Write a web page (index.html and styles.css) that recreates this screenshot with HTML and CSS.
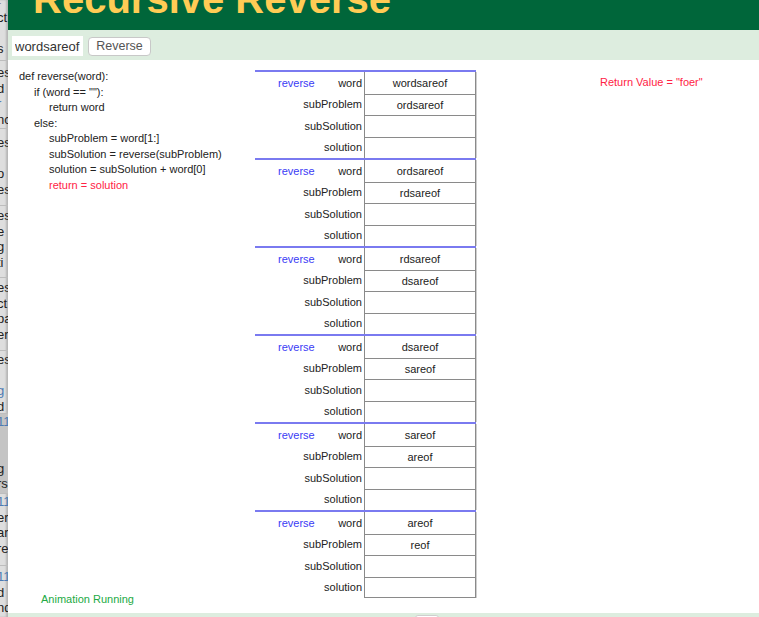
FILE: index.html
```html
<!DOCTYPE html>
<html>
<head>
<meta charset="utf-8">
<link rel="stylesheet" href="styles.css">
</head>
<body>
<div class="page">
  <aside class="sidebar">
    <div class="grp g1"><div>i.</div><div>ct</div><div></div><div>s</div></div>
    <div class="grp g2"><div>es</div><div>d</div><div class="blue">r</div><div>nc</div></div>
    <div class="grp g3"><div>es</div><div></div><div>o</div><div>es</div></div>
    <div class="grp g4"><div>es</div><div>e</div><div>g</div><div>ti</div></div>
    <div class="grp g5"><div>es</div><div>ct</div><div>pa</div><div>er</div></div>
    <div class="grp g6"><div>es</div><div></div><div class="blue">g</div><div>d</div></div>
    <div class="grp g7"><div class="blue">11</div><div></div><div></div><div>g</div><div>rs</div></div>
    <div class="grp g8"><div class="blue">11</div><div>er</div><div>ar</div><div>re</div></div>
    <div class="grp g9"><div class="blue">11</div><div>d</div><div>nd</div></div>
  </aside>
  <main class="main">
    <header class="header"><h1 class="title">Recursive Reverse</h1></header>
    <div class="toolbar">
      <input class="word-input" type="text" value="wordsareof">
      <button class="btn">Reverse</button>
    </div>
    <div class="content">
      <div class="code-col">
        <div class="code">
          <div class="ln">def reverse(word):</div>
          <div class="ln i1">if (word == ""):</div>
          <div class="ln i2">return word</div>
          <div class="ln i1">else:</div>
          <div class="ln i2">subProblem = word[1:]</div>
          <div class="ln i2">subSolution = reverse(subProblem)</div>
          <div class="ln i2">solution = subSolution + word[0]</div>
          <div class="ln i2 hl">return = solution</div>
        </div>
        <div class="status">Animation Running</div>
      </div>
      <div class="stack">
        <div class="frame">
          <div class="row"><div class="lab"><span class="fn">reverse</span>word</div><div class="val">wordsareof</div></div>
          <div class="row"><div class="lab">subProblem</div><div class="val">ordsareof</div></div>
          <div class="row"><div class="lab">subSolution</div><div class="val"></div></div>
          <div class="row"><div class="lab">solution</div><div class="val"></div></div>
        </div>
        <div class="frame">
          <div class="row"><div class="lab"><span class="fn">reverse</span>word</div><div class="val">ordsareof</div></div>
          <div class="row"><div class="lab">subProblem</div><div class="val">rdsareof</div></div>
          <div class="row"><div class="lab">subSolution</div><div class="val"></div></div>
          <div class="row"><div class="lab">solution</div><div class="val"></div></div>
        </div>
        <div class="frame">
          <div class="row"><div class="lab"><span class="fn">reverse</span>word</div><div class="val">rdsareof</div></div>
          <div class="row"><div class="lab">subProblem</div><div class="val">dsareof</div></div>
          <div class="row"><div class="lab">subSolution</div><div class="val"></div></div>
          <div class="row"><div class="lab">solution</div><div class="val"></div></div>
        </div>
        <div class="frame">
          <div class="row"><div class="lab"><span class="fn">reverse</span>word</div><div class="val">dsareof</div></div>
          <div class="row"><div class="lab">subProblem</div><div class="val">sareof</div></div>
          <div class="row"><div class="lab">subSolution</div><div class="val"></div></div>
          <div class="row"><div class="lab">solution</div><div class="val"></div></div>
        </div>
        <div class="frame">
          <div class="row"><div class="lab"><span class="fn">reverse</span>word</div><div class="val">sareof</div></div>
          <div class="row"><div class="lab">subProblem</div><div class="val">areof</div></div>
          <div class="row"><div class="lab">subSolution</div><div class="val"></div></div>
          <div class="row"><div class="lab">solution</div><div class="val"></div></div>
        </div>
        <div class="frame last">
          <div class="row"><div class="lab"><span class="fn">reverse</span>word</div><div class="val">areof</div></div>
          <div class="row"><div class="lab">subProblem</div><div class="val">reof</div></div>
          <div class="row"><div class="lab">subSolution</div><div class="val"></div></div>
          <div class="row"><div class="lab">solution</div><div class="val"></div></div>
        </div>
      </div>
      <div class="result">Return Value = "foer"</div>
    </div>
    <div class="footer"><span class="footer-btn"></span></div>
  </main>
</div>
</body>
</html>
```

FILE: styles.css
```css
html, body {
  margin: 0;
  padding: 0;
  height: 617px;
  overflow: hidden;
  background: #fff;
  font-family: "Liberation Sans", Arial, sans-serif;
}

.page {
  display: flex;
  height: 617px;
}

/* partially visible sidebar */
.sidebar {
  width: 8px;
  flex: none;
  overflow: hidden;
  background: #dedede;
  box-shadow: inset -2px 0 2px rgba(0, 0, 0, 0.18);
  font-size: 13px;
  color: #222;
  white-space: nowrap;
}
.grp {
  overflow: hidden;
  border-bottom: 1px solid #bdbdbd;
  box-sizing: border-box;
}
.grp div {
  height: 15.5px;
  line-height: 15.5px;
  margin-left: -3px;
}
.sidebar .blue { color: #4d7bb3; }
.g1 { height: 61px; }
.g1 div:first-child { margin-top: -6px; font-size: 9px; color: #777; }
.g2 { height: 68px; padding-top: 4px; }
.g3 { height: 77px; padding-top: 6px; }
.g4 { height: 72px; padding-top: 2px; }
.g5 { height: 73px; padding-top: 2px; }
.g6 { height: 63px; padding-top: 1px; }
.g7 { height: 80px; background: #c4c4c4; }
.g8 { height: 72px; }
.g9 { height: 60px; padding-top: 3px; border-bottom: none; }

.main {
  flex: 1;
  display: flex;
  flex-direction: column;
  min-width: 0;
}

.header {
  height: 30px;
  flex: none;
  background: #00663a;
  overflow: hidden;
  padding-left: 25px;
}
.title {
  margin: -21px 0 0 0;
  font-size: 40px;
  line-height: 40px;
  font-weight: bold;
  color: #ffcc55;
  white-space: nowrap;
}

.toolbar {
  height: 30px;
  flex: none;
  background: #ddeddf;
  display: flex;
  align-items: center;
  padding-left: 4px;
  gap: 5px;
  box-sizing: border-box;
  padding-top: 2px;
}
.word-input {
  width: 71px;
  height: 20px;
  box-sizing: border-box;
  border: none;
  outline: none;
  background: #fff;
  padding: 0 0 0 3px;
  font-family: "Liberation Sans", Arial, sans-serif;
  font-size: 13px;
  color: #333;
}
.btn {
  width: 63px;
  height: 19px;
  box-sizing: border-box;
  border: 1px solid #c8c8c8;
  border-radius: 4px;
  background: #fff;
  padding: 0;
  font-family: "Liberation Sans", Arial, sans-serif;
  font-size: 12.5px;
  color: #555;
}

.content {
  height: 553px;
  flex: none;
  display: flex;
  align-items: flex-start;
}

.code-col {
  width: 247px;
  height: 553px;
  box-sizing: border-box;
  padding: 9px 0 6px 11px;
  display: flex;
  flex-direction: column;
  flex: none;
}
.code {
  font-size: 11px;
  color: #222;
}
.ln {
  line-height: 15.5px;
  white-space: nowrap;
}
.i1 { padding-left: 15px; }
.i2 { padding-left: 30px; }
.hl { color: #ff2244; }
.status {
  margin-top: auto;
  margin-left: 22px;
  font-size: 11px;
  line-height: 15px;
  color: #22aa44;
}

.stack {
  margin-top: 10px;
  width: 221px;
  flex: none;
  font-size: 11px;
  color: #222;
}
.frame {
  border-top: 2px solid #7a7af0;
  height: 88px;
  box-sizing: border-box;
  display: grid;
  grid-template-rows: repeat(4, 1fr);
}
.row {
  display: grid;
  grid-template-columns: 109px 112px;
}
.lab {
  display: flex;
  align-items: center;
  justify-content: flex-end;
  padding-right: 2px;
  white-space: nowrap;
}
.fn {
  color: #3b3bf5;
  margin-left: 23px;
  margin-right: auto;
}
.val {
  display: flex;
  align-items: center;
  justify-content: center;
  border-left: 1px solid #8a8a8a;
  border-right: 1px solid #8a8a8a;
  box-shadow: 1px 0 0 #cfcfcf;
  box-sizing: border-box;
}
.row + .row .val {
  border-top: 1px solid #8a8a8a;
}
.frame.last .row:last-child .val {
  border-bottom: 1px solid #8a8a8a;
}

.result {
  margin-left: 124px;
  margin-top: 15px;
  font-size: 11px;
  line-height: 15px;
  color: #ff2244;
  white-space: nowrap;
}

.footer {
  flex: 1;
  background: #ddeddf;
  padding-left: 407px;
  padding-top: 2px;
}
.footer-btn {
  display: block;
  width: 22px;
  height: 10px;
  background: #fff;
  border: 1px solid #cfcfcf;
  border-radius: 3px;
}
```
